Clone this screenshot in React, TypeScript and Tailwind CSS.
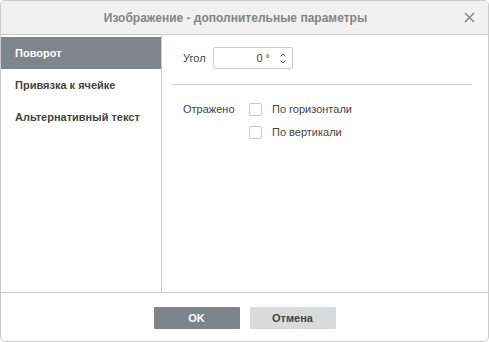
const menu = ['Поворот', 'Привязка к ячейке', 'Альтернативный текст']

const Check = ({ label }: { label: string }) => (
  <div className="flex items-center h-[13px]">
    <span className="w-[13px] h-[13px] border border-[#c8c8c8] rounded-[2px] bg-white" />
    <span className="ml-[10px] text-[11px] text-[#444]">{label}</span>
  </div>
)

const App = () => {
  return (
    <div className="w-[489px] h-[342px] bg-white border border-[#cbcbcb] rounded-[5px] overflow-hidden flex flex-col font-['Liberation_Sans',Arial,sans-serif]">
      <div className="relative h-[34px] shrink-0 bg-[#f1f1f1] border-b border-[#cbcbcb] flex items-center justify-center pr-[18px]">
        <span className="text-[12px] font-bold text-[#848484]">Изображение - дополнительные параметры</span>
        <svg className="absolute right-[13px] top-[11px]" width="11" height="11" viewBox="0 0 11 11">
          <path d="M1 1 L10 10 M10 1 L1 10" stroke="#8a8a8a" strokeWidth="1.6" />
        </svg>
      </div>

      <div className="flex flex-1 min-h-0">
        <div className="w-[161px] shrink-0 border-r border-[#cbcbcb] pt-[2px]">
          {menu.map((item, i) => (
            <div
              key={item}
              className={
                i === 0
                  ? 'h-[32px] px-[14px] flex items-center bg-[#7e858c] text-white text-[11px] font-bold'
                  : 'h-[32px] px-[14px] flex items-center text-[#444] text-[11px] font-bold'
              }
            >
              {item}
            </div>
          ))}
        </div>

        <div className="flex-1 pt-[12px]">
          <div className="flex items-center pl-[21px]">
            <span className="w-[30px] text-[11px] text-[#444]">Угол</span>
            <div className="w-[80px] h-[22px] border border-[#cfcfcf] rounded-[2px] flex items-center justify-end">
              <span className="text-[11px] text-[#444] mr-[10px]">0 °</span>
              <div className="flex flex-col gap-[3px] mr-[6px]">
                <svg width="6" height="4" viewBox="0 0 6 4">
                  <path d="M0.5 3.5 L3 1 L5.5 3.5" stroke="#555" strokeWidth="0.9" fill="none" />
                </svg>
                <svg width="6" height="4" viewBox="0 0 6 4">
                  <path d="M0.5 0.5 L3 3 L5.5 0.5" stroke="#555" strokeWidth="0.9" fill="none" />
                </svg>
              </div>
            </div>
          </div>

          <div className="ml-[10px] mr-[16px] mt-[15px] border-t border-[#cbcbcb]" />

          <div className="flex pl-[21px] mt-[18px]">
            <span className="w-[66px] text-[11px] text-[#444] leading-[13px]">Отражено</span>
            <div className="flex flex-col gap-[10px]">
              <Check label="По горизонтали" />
              <Check label="По вертикали" />
            </div>
          </div>
        </div>
      </div>

      <div className="h-[49px] shrink-0 border-t border-[#cbcbcb] flex justify-center gap-[10px] pt-[14px]">
        <button className="w-[86px] h-[22px] bg-[#7d858c] text-white text-[11px] font-bold rounded-[1px]">OK</button>
        <button className="w-[86px] h-[22px] bg-[#d8dadc] text-[#444] text-[11px] font-bold rounded-[1px]">Отмена</button>
      </div>
    </div>
  )
}

export default App
